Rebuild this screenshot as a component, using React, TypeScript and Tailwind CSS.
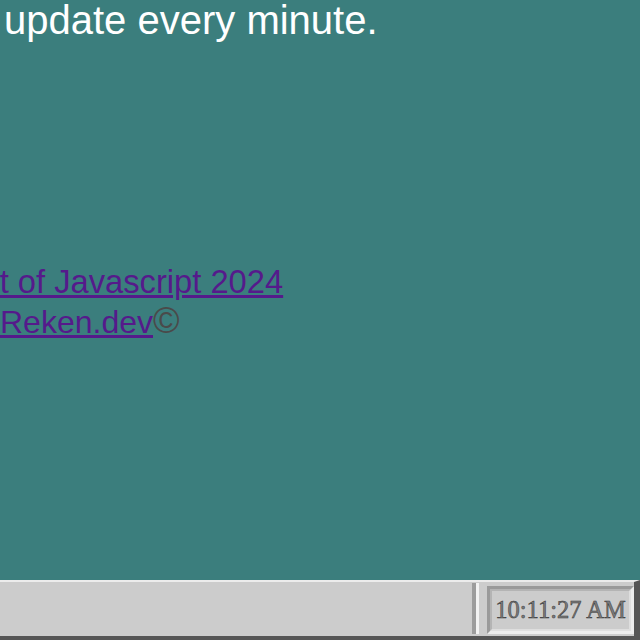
export default function App() {
  return (
    <div className="flex h-screen w-full flex-col overflow-hidden bg-[#3b7e7d] font-['Liberation_Sans',Arial,sans-serif]">
      {/* desktop area */}
      <div className="flex flex-1 flex-col overflow-hidden">
        <p className="whitespace-nowrap pl-[4px] text-[40px] leading-[40px] text-white">update every minute.</p>

        <div className="mt-[221px] flex flex-col text-[32px] leading-[41px]">
          <a href="#" className="-ml-[93px] whitespace-nowrap text-[32.7px] text-[#551a8b] underline">
            Advent of Javascript 2024
          </a>
          <p className="whitespace-nowrap">
            <a href="#" className="text-[#551a8b] underline">Reken.dev</a>
            <span className="text-[36px] leading-none text-[#4a4a4a]">©</span>
          </p>
        </div>
      </div>

      {/* taskbar */}
      <div className="flex h-[60px] items-stretch justify-end border-t-2 border-r-[6px] border-b-4 border-t-[#ececec] border-r-[#555555] border-b-[#555555] bg-[#cccccc]">
        <div className="mt-[1px] mb-[2px] flex w-[7px] border-l-4 border-r-[3px] border-l-[#9c9c9c] border-r-[#f2f2f2]" />
        <div className="mt-[4px] mb-[2px] ml-[8px] flex w-[147px] border-[3px] border-t-[#9a9a9a] border-l-[#9a9a9a] border-b-[#ececec] border-r-[#ececec]">
          <div className="flex flex-1 items-center justify-center border-2 border-t-[#b4b4b4] border-l-[#b4b4b4] border-b-[#dedede] border-r-[#dedede] bg-[#cccccc]">
            <span className="whitespace-nowrap font-['Liberation_Serif','Times_New_Roman',serif] text-[24.5px] leading-none text-[#7c7c7c] [-webkit-text-stroke:0.5px_#333]">
              10:11:27 AM
            </span>
          </div>
        </div>
      </div>
    </div>
  );
}
